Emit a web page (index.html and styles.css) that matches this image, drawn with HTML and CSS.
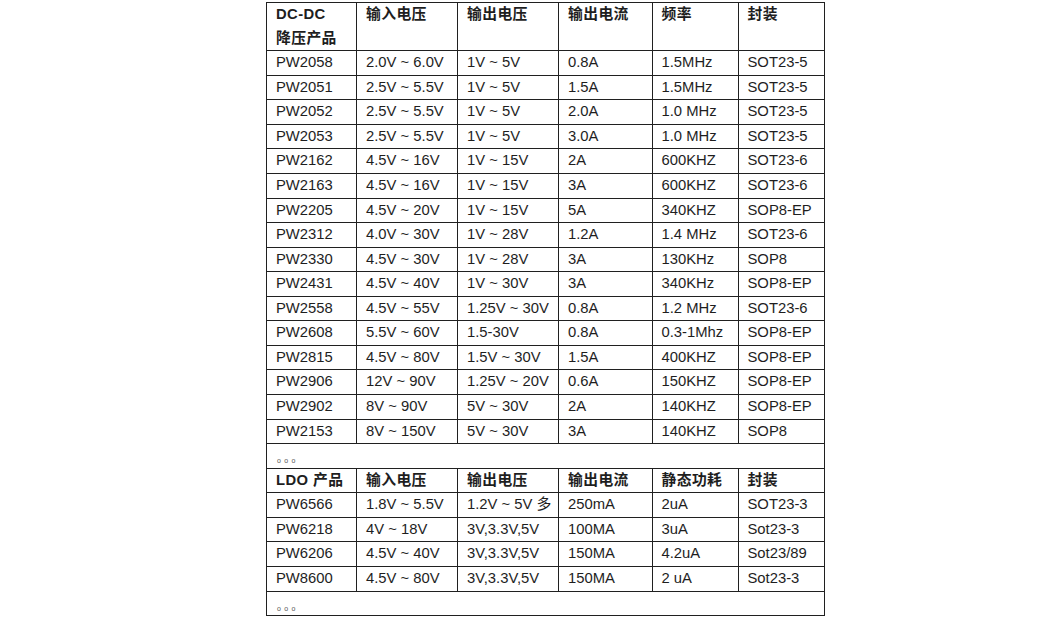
FILE: index.html
```html
<!DOCTYPE html>
<html lang="zh">
<head>
<meta charset="utf-8">
<link rel="stylesheet" href="styles.css">
</head>
<body>
<table class="spec">
<colgroup>
<col class="c1"><col class="c2"><col class="c3"><col class="c4"><col class="c5"><col class="c6">
</colgroup>
<tbody>
<tr class="head"><td>DC-DC<br>降压产品</td><td>输入电压</td><td>输出电压</td><td>输出电流</td><td>频率</td><td>封装</td></tr>
<tr><td>PW2058</td><td>2.0V ~ 6.0V</td><td>1V ~ 5V</td><td>0.8A</td><td>1.5MHz</td><td>SOT23-5</td></tr>
<tr><td>PW2051</td><td>2.5V ~ 5.5V</td><td>1V ~ 5V</td><td>1.5A</td><td>1.5MHz</td><td>SOT23-5</td></tr>
<tr><td>PW2052</td><td>2.5V ~ 5.5V</td><td>1V ~ 5V</td><td>2.0A</td><td>1.0 MHz</td><td>SOT23-5</td></tr>
<tr><td>PW2053</td><td>2.5V ~ 5.5V</td><td>1V ~ 5V</td><td>3.0A</td><td>1.0 MHz</td><td>SOT23-5</td></tr>
<tr><td>PW2162</td><td>4.5V ~ 16V</td><td>1V ~ 15V</td><td>2A</td><td>600KHZ</td><td>SOT23-6</td></tr>
<tr><td>PW2163</td><td>4.5V ~ 16V</td><td>1V ~ 15V</td><td>3A</td><td>600KHZ</td><td>SOT23-6</td></tr>
<tr><td>PW2205</td><td>4.5V ~ 20V</td><td>1V ~ 15V</td><td>5A</td><td>340KHZ</td><td>SOP8-EP</td></tr>
<tr><td>PW2312</td><td>4.0V ~ 30V</td><td>1V ~ 28V</td><td>1.2A</td><td>1.4 MHz</td><td>SOT23-6</td></tr>
<tr><td>PW2330</td><td>4.5V ~ 30V</td><td>1V ~ 28V</td><td>3A</td><td>130KHz</td><td>SOP8</td></tr>
<tr><td>PW2431</td><td>4.5V ~ 40V</td><td>1V ~ 30V</td><td>3A</td><td>340KHz</td><td>SOP8-EP</td></tr>
<tr><td>PW2558</td><td>4.5V ~ 55V</td><td>1.25V ~ 30V</td><td>0.8A</td><td>1.2 MHz</td><td>SOT23-6</td></tr>
<tr><td>PW2608</td><td>5.5V ~ 60V</td><td>1.5-30V</td><td>0.8A</td><td>0.3-1Mhz</td><td>SOP8-EP</td></tr>
<tr><td>PW2815</td><td>4.5V ~ 80V</td><td>1.5V ~ 30V</td><td>1.5A</td><td>400KHZ</td><td>SOP8-EP</td></tr>
<tr><td>PW2906</td><td>12V ~ 90V</td><td>1.25V ~ 20V</td><td>0.6A</td><td>150KHZ</td><td>SOP8-EP</td></tr>
<tr><td>PW2902</td><td>8V ~ 90V</td><td>5V ~ 30V</td><td>2A</td><td>140KHZ</td><td>SOP8-EP</td></tr>
<tr><td>PW2153</td><td>8V ~ 150V</td><td>5V ~ 30V</td><td>3A</td><td>140KHZ</td><td>SOP8</td></tr>
<tr><td colspan="6" class="more"><span class="dots">ooo</span></td></tr>
<tr class="head"><td>LDO 产品</td><td>输入电压</td><td>输出电压</td><td>输出电流</td><td>静态功耗</td><td>封装</td></tr>
<tr><td>PW6566</td><td>1.8V ~ 5.5V</td><td>1.2V ~ 5V 多</td><td>250mA</td><td>2uA</td><td>SOT23-3</td></tr>
<tr><td>PW6218</td><td>4V ~ 18V</td><td>3V,3.3V,5V</td><td>100MA</td><td>3uA</td><td>Sot23-3</td></tr>
<tr><td>PW6206</td><td>4.5V ~ 40V</td><td>3V,3.3V,5V</td><td>150MA</td><td>4.2uA</td><td>Sot23/89</td></tr>
<tr><td>PW8600</td><td>4.5V ~ 80V</td><td>3V,3.3V,5V</td><td>150MA</td><td>2 uA</td><td>Sot23-3</td></tr>
<tr><td colspan="6" class="more"><span class="dots">ooo</span></td></tr>
</tbody>
</table>
</body>
</html>
```

FILE: styles.css
```css
html, body {
  margin: 0;
  padding: 0;
  background: #ffffff;
}

body {
  padding: 2px 0 0 266px;
  font-family: "Liberation Sans", Arial, "Noto Sans CJK SC", sans-serif;
  color: #1e1e1e;
}

.spec {
  border-collapse: collapse;
  table-layout: fixed;
  width: 558px;
  font-size: 14.8px;
}

.c1 { width: 90px; }
.c2 { width: 101px; }
.c3 { width: 101px; }
.c4 { width: 93.5px; }
.c5 { width: 86px; }
.c6 { width: 86.5px; }

.spec td {
  border: 1px solid #202020;
  padding: 0 0 0 9px;
  line-height: 23.56px;
  height: 23.56px;
  vertical-align: top;
  white-space: nowrap;
  overflow: hidden;
}

.head td {
  font-weight: bold;
  letter-spacing: 0.4px;
}

.dots {
  display: inline-block;
  font-size: 7px;
  letter-spacing: 3.4px;
  color: #555;
  line-height: 7px;
  vertical-align: -3px;
  padding-left: 1px;
}
```
